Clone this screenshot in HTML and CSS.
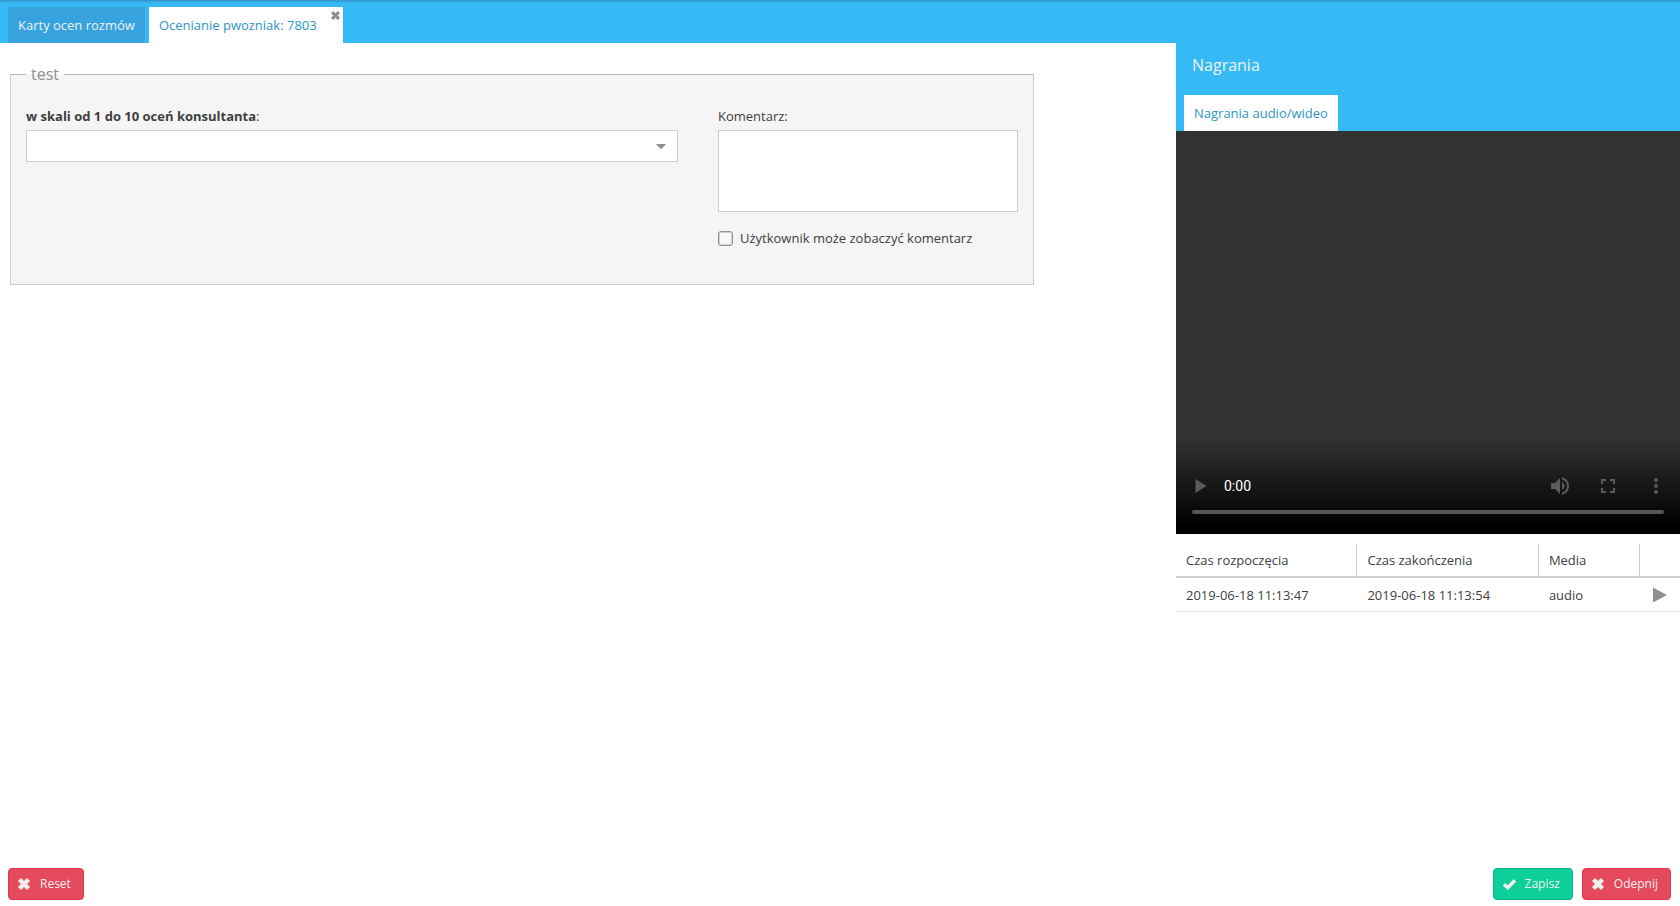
FILE: index.html
```html
<!DOCTYPE html>
<html lang="pl">
<head>
<meta charset="utf-8">
<meta name="viewport" content="width=device-width, initial-scale=1">
<title>Ocenianie pwozniak: 7803</title>
<link rel="stylesheet" href="styles.css">
</head>
<body>
<svg class="sprite" aria-hidden="true">
  <symbol id="cross" viewBox="0 0 12 12"><path d="M3 0.5 6 3.5 9 0.5 11.5 3 8.5 6 11.5 9 9 11.5 6 8.5 3 11.5 0.5 9 3.5 6 0.5 3Z" stroke="currentColor" stroke-linejoin="round"/></symbol>
</svg>
<header class="topbar">
  <nav class="tabs">
    <button class="tab" type="button">Karty ocen rozmów</button>
    <div class="tab-wrap">
      <button class="tab tab-active tab-closable" type="button">Ocenianie pwozniak: 7803</button>
      <button class="tab-close" type="button" aria-label="Zamknij"><svg width="9" height="9" fill="currentColor"><use href="#cross"/></svg></button>
    </div>
  </nav>
</header>
<div class="workspace">
  <main class="content">
    <fieldset class="card">
      <legend class="card-title">test</legend>
      <div class="card-body">
        <div class="question">
          <label class="label" for="score"><b>w skali od 1 do 10 oceń konsultanta</b>:</label>
          <div class="select-wrap">
            <select class="select" id="score"><option></option></select>
            <svg class="caret" width="10" height="5" viewBox="0 0 10 5" aria-hidden="true"><path d="M0 0H10L6 4.6Q5 5.4 4 4.6Z" fill="#919191"/></svg>
          </div>
        </div>
        <div class="comment">
          <label class="label" for="comment">Komentarz:</label>
          <textarea class="textarea" id="comment"></textarea>
          <label class="check"><input class="checkbox" type="checkbox">Użytkownik może zobaczyć komentarz</label>
        </div>
      </div>
    </fieldset>
  </main>
  <aside class="side">
    <h1 class="side-title">Nagrania</h1>
    <div class="tabs"><button class="tab tab-active" type="button">Nagrania audio/wideo</button></div>
    <div class="player">
      <div class="controls">
        <button class="control" type="button" aria-label="Odtwórz"><svg width="24" height="24" viewBox="0 0 24 24"><path d="M7.500 5v14l11-7z"/></svg></button>
        <span class="time">0:00</span>
        <span class="spacer"></span>
        <button class="control" type="button" aria-label="Głośność"><svg width="24" height="24" viewBox="0 0 24 24"><path d="M3 9v6h4l5 5V4L7 9H3zm13.500 3c0-1.770-1.020-3.290-2.500-4.030v8.050c1.480-.73 2.500-2.250 2.500-4.020zM14 3.230v2.060c2.890.86 5 3.540 5 6.710s-2.110 5.850-5 6.710v2.060c4.010-.91 7-4.490 7-8.770s-2.990-7.860-7-8.770z"/></svg></button>
        <button class="control" type="button" aria-label="Pełny ekran"><svg width="24" height="24" viewBox="0 0 24 24"><path d="M7 14H5v5h5v-2H7v-3zm-2-4h2V7h3V5H5v5zm12 7h-3v2h5v-5h-2v3zM14 5v2h3v3h2V5h-5z"/></svg></button>
        <button class="control" type="button" aria-label="Więcej"><svg width="24" height="24" viewBox="0 0 24 24"><circle cx="12" cy="6" r="2"/><circle cx="12" cy="12" r="2"/><circle cx="12" cy="18" r="2"/></svg></button>
      </div>
      <div class="progress"></div>
    </div>
    <table class="records">
      <colgroup><col class="col-time"><col class="col-time"><col class="col-media"><col class="col-play"></colgroup>
      <thead><tr><th>Czas rozpoczęcia</th><th>Czas zakończenia</th><th>Media</th><th></th></tr></thead>
      <tbody><tr><td>2019-06-18 11:13:47</td><td>2019-06-18 11:13:54</td><td>audio</td>
        <td class="play-cell"><button class="row-play" type="button" aria-label="Odtwórz"><svg width="14" height="16" viewBox="0 0 14 16"><path d="M0 0.500V15.500L14 8Z" fill="#919191"/></svg></button></td></tr></tbody>
    </table>
  </aside>
</div>
<footer class="footer">
  <button class="btn btn-red" type="button"><svg width="12" height="12" fill="currentColor"><use href="#cross"/></svg>Reset</button>
  <div class="actions">
    <button class="btn btn-green" type="button"><svg width="15" height="12" viewBox="0 0 15 12"><path d="M2 6.300 5.800 9.800 13 2.300" fill="none" stroke="currentColor" stroke-width="3.400"/></svg>Zapisz</button>
    <button class="btn btn-red" type="button"><svg width="12" height="12" fill="currentColor"><use href="#cross"/></svg>Odepnij</button>
  </div>
</footer>
</body>
</html>
```
FILE: styles.css
```css
* { box-sizing: border-box; }

body {
  margin: 0;
  min-height: 100vh;
  display: flex;
  flex-direction: column;
  background: #fff;
  color: #404040;
  font: 13px/18px "Open Sans", sans-serif;
}

button { font: inherit; border: 0; cursor: pointer; }
svg { display: block; flex: none; }
.sprite { position: absolute; width: 0; height: 0; }

.topbar {
  padding-top: 7px;
  background: linear-gradient(#2f94c9 0, #36aae2 2px, #35baf6 3px);
}
.tabs { display: flex; gap: 4px; padding: 0 8px; }
.tab {
  height: 36px;
  padding: 0 10px;
  background: #36a2de;
  color: #f0f0f0;
  white-space: nowrap;
}
.tab-active { background: #fff; color: #2f94c6; }
.tab-wrap { position: relative; }
.tab-closable { padding-right: 26px; }
.tab-close {
  position: absolute;
  top: 4px;
  right: 3px;
  padding: 0;
  background: none;
  color: #8f8f8f;
}

.workspace { flex: 1; display: flex; }
.content { flex: 1; min-width: 0; padding: 20px 142px 0 10px; }

.card {
  margin: 0;
  padding: 0 15px 37px;
  min-width: 0;
  border: 1px solid #cecece;
  border-top-color: #b5b5b5;
  background: #f5f5f5;
}
.card-title { padding: 0 5px; color: #919191; font-size: 16px; line-height: 22px; }
.card-body { display: flex; gap: 40px; padding-top: 22px; }
.question { flex: 1; }
.comment { flex: none; width: 300px; }
.label { display: block; margin-bottom: 5px; }
.label b { font-weight: 700; }
.select-wrap { position: relative; }
.select, .textarea {
  display: block;
  width: 100%;
  border: 1px solid #cecece;
  border-radius: 0;
  background: #fff;
  color: inherit;
  font: inherit;
}
.select { height: 32px; padding: 0 30px 0 10px; appearance: none; }
.caret { position: absolute; top: 14px; right: 12px; pointer-events: none; }
.textarea { height: 82px; padding: 6px 10px; resize: none; }
.check { display: flex; align-items: center; gap: 7px; margin-top: 17px; }
.checkbox {
  appearance: none;
  flex: none;
  width: 15px;
  height: 15px;
  margin: 0;
  border: 1px solid #919191;
  border-radius: 3px;
  box-shadow: inset 0 0 0 1px #d2d2d2;
  background: #f8f8f8;
}
.checkbox:checked { background: #35baf6; }

.side { flex: none; width: 30%; background: linear-gradient(#35baf6 88px, transparent 88px); }
.side-title {
  margin: 0;
  padding: 11px 16px 19px;
  color: #f0f0f0;
  font-size: 16px;
  font-weight: 400;
  line-height: 22px;
}
.player {
  aspect-ratio: 5 / 4;
  display: flex;
  flex-direction: column;
  justify-content: flex-end;
  padding: 0 16px 20px;
  background: linear-gradient(#333 76%, #000 98%);
}
.controls { display: flex; align-items: center; gap: 24px; margin-right: -4px; }
.control { padding: 0; background: none; }
.control svg { fill: #5b5b5b; }
.controls > .control:first-child { margin: 0 -12px 0 -4px; }
.time { color: #fff; font: 14px/18px Roboto, sans-serif; }
.spacer { flex: 1; }
.progress { height: 4px; margin-top: 12px; border-radius: 2px; background: #555; }

.records { width: 100%; margin-top: 10px; border-collapse: separate; border-spacing: 0; table-layout: fixed; }
.col-time { width: 36%; }
.col-media { width: 20%; }
.col-play { width: 8%; }
.records th, .records td { padding: 0 10px; text-align: left; font-weight: 400; }
.records th { height: 34px; border-right: 1px solid #cecece; border-bottom: 2px solid #cecece; }
.records th:last-child { border-right: 0; }
.records td { height: 34px; border-bottom: 1px solid #e9e9e9; }
.records .play-cell { padding: 0 13px; }
.row-play { display: block; padding: 0; background: none; }

.footer { display: flex; justify-content: space-between; padding: 6px 9px 6px 8px; }
.actions { display: flex; gap: 9px; }
.btn {
  display: flex;
  align-items: center;
  gap: 10px;
  height: 32px;
  padding: 0 12px 0 9px;
  border: 1px solid #e0374b;
  border-radius: 4px;
  background: #e4495c;
  color: #f0f0f0;
  font-size: 12px;
}
.btn-green { gap: 8px; padding-left: 8px; border-color: #0bb586; background: #0ccf99; }
```
